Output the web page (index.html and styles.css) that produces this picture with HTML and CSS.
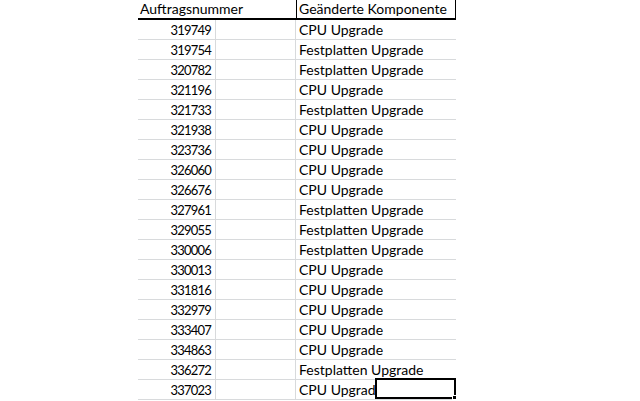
FILE: index.html
```html
<!DOCTYPE html>
<html lang="de">
<head>
<meta charset="utf-8">
<title>Auftragsnummern</title>
<link rel="stylesheet" href="styles.css">
</head>
<body>
<div class="sheet">
  <div class="head">
    <div class="hcell">Auftragsnummer</div>
    <div class="hcell boxed">Geänderte Komponente</div>
  </div>
  <div class="row"><div class="num">319749</div><div class="gap"></div><div class="txt">CPU Upgrade</div></div>
  <div class="row"><div class="num">319754</div><div class="gap"></div><div class="txt">Festplatten Upgrade</div></div>
  <div class="row"><div class="num">320782</div><div class="gap"></div><div class="txt">Festplatten Upgrade</div></div>
  <div class="row"><div class="num">321196</div><div class="gap"></div><div class="txt">CPU Upgrade</div></div>
  <div class="row"><div class="num">321733</div><div class="gap"></div><div class="txt">Festplatten Upgrade</div></div>
  <div class="row"><div class="num">321938</div><div class="gap"></div><div class="txt">CPU Upgrade</div></div>
  <div class="row"><div class="num">323736</div><div class="gap"></div><div class="txt">CPU Upgrade</div></div>
  <div class="row"><div class="num">326060</div><div class="gap"></div><div class="txt">CPU Upgrade</div></div>
  <div class="row"><div class="num">326676</div><div class="gap"></div><div class="txt">CPU Upgrade</div></div>
  <div class="row"><div class="num">327961</div><div class="gap"></div><div class="txt">Festplatten Upgrade</div></div>
  <div class="row"><div class="num">329055</div><div class="gap"></div><div class="txt">Festplatten Upgrade</div></div>
  <div class="row"><div class="num">330006</div><div class="gap"></div><div class="txt">Festplatten Upgrade</div></div>
  <div class="row"><div class="num">330013</div><div class="gap"></div><div class="txt">CPU Upgrade</div></div>
  <div class="row"><div class="num">331816</div><div class="gap"></div><div class="txt">CPU Upgrade</div></div>
  <div class="row"><div class="num">332979</div><div class="gap"></div><div class="txt">CPU Upgrade</div></div>
  <div class="row"><div class="num">333407</div><div class="gap"></div><div class="txt">CPU Upgrade</div></div>
  <div class="row"><div class="num">334863</div><div class="gap"></div><div class="txt">CPU Upgrade</div></div>
  <div class="row"><div class="num">336272</div><div class="gap"></div><div class="txt">Festplatten Upgrade</div></div>
  <div class="row last"><div class="num">337023</div><div class="gap"></div><div class="txt">CPU Upgrade<span class="selection"><span class="handle"></span></span></div></div>
</div>
</body>
</html>
```
FILE: styles.css
```css
html, body {
  margin: 0;
  padding: 0;
  background: #ffffff;
}

body {
  font-family: Lato, "Open Sans", sans-serif;
  font-size: 14px;
  color: #000000;
  overflow: hidden;
}

.sheet {
  width: 318px;
  margin-left: 138px;
}

.head {
  display: grid;
  grid-template-columns: 158px 160px;
  height: 20px;
  box-sizing: border-box;
  border-bottom: 2px solid #000000;
}

.hcell {
  line-height: 18px;
  padding-left: 2px;
  white-space: nowrap;
}

.hcell.boxed {
  padding-left: 2px;
  border-left: 1px solid #000000;
  border-right: 1px solid #000000;
}

.row {
  display: grid;
  grid-template-columns: 78px 80px 160px;
  height: 20px;
  box-sizing: border-box;
  border-bottom: 1px solid #d8dadc;
}

.num {
  text-align: right;
  padding-right: 4px;
  line-height: 20px;
  font-size: 13px;
  letter-spacing: -0.8px;
  border-right: 1px solid #d8dadc;
}

.gap {
  border-right: 1px solid #d8dadc;
}

.txt {
  position: relative;
  padding-left: 3px;
  line-height: 20px;
  white-space: nowrap;
}

.selection {
  position: absolute;
  left: 79px;
  top: -2px;
  width: 81px;
  height: 21px;
  box-sizing: border-box;
  border: 2px solid #000000;
  background: #ffffff;
}

.handle {
  position: absolute;
  right: -3px;
  bottom: -3px;
  width: 3px;
  height: 3px;
  background: #000000;
  border: 1px solid #ffffff;
}
```
